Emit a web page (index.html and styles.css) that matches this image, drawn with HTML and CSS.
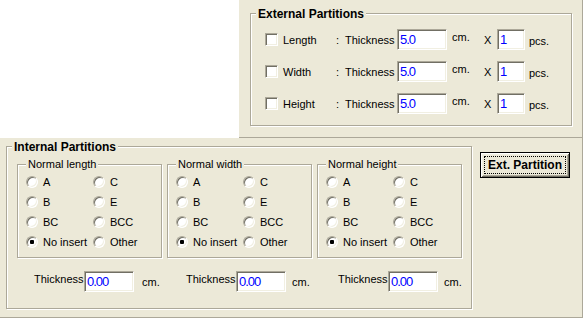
FILE: index.html
```html
<!DOCTYPE html>
<html lang="en">
<head>
  <meta charset="UTF-8">
  <title>Partitions</title>
  <link rel="stylesheet" href="styles.css">
</head>
<body>
<div class="top">
  <div class="panel ext-panel">
    <div class="group ext-group">
      <span class="group-title">External Partitions</span>
      <div class="ext-row">
        <input type="checkbox" class="check">
        <span class="name">Length</span>
        <span class="colon">:</span>
        <span class="thick">Thickness</span>
        <input class="field field-wide" value="5.0">
        <span class="unit">cm.</span>
        <span class="times">X</span>
        <input class="field field-small" value="1">
        <span class="pcs">pcs.</span>
      </div>
      <div class="ext-row">
        <input type="checkbox" class="check">
        <span class="name">Width</span>
        <span class="colon">:</span>
        <span class="thick">Thickness</span>
        <input class="field field-wide" value="5.0">
        <span class="unit">cm.</span>
        <span class="times">X</span>
        <input class="field field-small" value="1">
        <span class="pcs">pcs.</span>
      </div>
      <div class="ext-row">
        <input type="checkbox" class="check">
        <span class="name">Height</span>
        <span class="colon">:</span>
        <span class="thick">Thickness</span>
        <input class="field field-wide" value="5.0">
        <span class="unit">cm.</span>
        <span class="times">X</span>
        <input class="field field-small" value="1">
        <span class="pcs">pcs.</span>
      </div>
    </div>
  </div>
</div>

<div class="panel bottom-panel">
  <div class="group int-group">
    <span class="group-title">Internal Partitions</span>
    <div class="boxes">
      <div class="group box">
        <span class="box-title">Normal length</span>
        <div class="radios">
          <label class="opt"><input type="radio" name="len">A</label>
          <label class="opt"><input type="radio" name="len">C</label>
          <label class="opt"><input type="radio" name="len">B</label>
          <label class="opt"><input type="radio" name="len">E</label>
          <label class="opt"><input type="radio" name="len">BC</label>
          <label class="opt"><input type="radio" name="len">BCC</label>
          <label class="opt"><input type="radio" name="len" checked>No insert</label>
          <label class="opt"><input type="radio" name="len">Other</label>
        </div>
      </div>
      <div class="group box">
        <span class="box-title">Normal width</span>
        <div class="radios">
          <label class="opt"><input type="radio" name="wid">A</label>
          <label class="opt"><input type="radio" name="wid">C</label>
          <label class="opt"><input type="radio" name="wid">B</label>
          <label class="opt"><input type="radio" name="wid">E</label>
          <label class="opt"><input type="radio" name="wid">BC</label>
          <label class="opt"><input type="radio" name="wid">BCC</label>
          <label class="opt"><input type="radio" name="wid" checked>No insert</label>
          <label class="opt"><input type="radio" name="wid">Other</label>
        </div>
      </div>
      <div class="group box">
        <span class="box-title">Normal height</span>
        <div class="radios">
          <label class="opt"><input type="radio" name="hei">A</label>
          <label class="opt"><input type="radio" name="hei">C</label>
          <label class="opt"><input type="radio" name="hei">B</label>
          <label class="opt"><input type="radio" name="hei">E</label>
          <label class="opt"><input type="radio" name="hei">BC</label>
          <label class="opt"><input type="radio" name="hei">BCC</label>
          <label class="opt"><input type="radio" name="hei" checked>No insert</label>
          <label class="opt"><input type="radio" name="hei">Other</label>
        </div>
      </div>
    </div>
    <div class="thick-row">
      <div class="thick-cell">
        <span class="thick-label">Thickness</span>
        <input class="field field-mid" value="0.00">
        <span class="thick-unit">cm.</span>
      </div>
      <div class="thick-cell">
        <span class="thick-label">Thickness</span>
        <input class="field field-mid" value="0.00">
        <span class="thick-unit">cm.</span>
      </div>
      <div class="thick-cell">
        <span class="thick-label">Thickness</span>
        <input class="field field-mid" value="0.00">
        <span class="thick-unit">cm.</span>
      </div>
    </div>
  </div>
  <button class="btn"><span>Ext. Partition</span></button>
</div>
</body>
</html>
```

FILE: styles.css
```css
* {
    box-sizing: border-box;
}

body {
    margin: 0;
    width: 584px;
    height: 320px;
    background: #fff;
    font-family: "Liberation Sans", Arial, sans-serif;
    font-size: 11px;
    color: #000;
    overflow: hidden;
}

.top {
    display: flex;
    justify-content: flex-end;
    padding-right: 1px;
}

.panel {
    background: #ECE9D8;
    border-right: 1px solid #ACA899;
}

.ext-panel {
    width: 344px;
    height: 138px;
    padding: 13px 0 0 11px;
    border-bottom: 1px solid #ACA899;
}

.bottom-panel {
    width: 583px;
    height: 180px;
    display: flex;
    align-items: flex-start;
    padding: 8px 0 0 6px;
    border-bottom: 1px solid #ACA899;
}

/* etched group boxes */
.group {
    position: relative;
    border: 1px solid #ACA899;
    box-shadow: inset 1px 1px #fff, 1px 1px #fff;
}

.group-title {
    position: absolute;
    top: -7px;
    left: 5px;
    padding: 0 2px;
    background: #ECE9D8;
    font-weight: bold;
    font-size: 12px;
    line-height: 14px;
}

.box-title {
    position: absolute;
    top: -7px;
    left: 8px;
    padding: 0 2px;
    background: #ECE9D8;
    line-height: 13px;
}

.ext-group {
    width: 322px;
    height: 113px;
    padding: 15px 0 0 14px;
    display: flex;
    flex-direction: column;
    gap: 11px;
}

.ext-row {
    display: flex;
    align-items: center;
    height: 21px;
}

.check {
    appearance: none;
    width: 13px;
    height: 13px;
    margin: 0;
    border: 1px solid;
    border-color: #ACA899 #fff #fff #ACA899;
    box-shadow: inset 1px 1px #716F64, inset -1px -1px #F1EFE2;
    background: #fff;
}

.name {
    width: 53px;
    margin-left: 5px;
}

.colon {
    width: 9px;
}

.thick {
    width: 52px;
}

.field {
    height: 21px;
    margin: 0;
    padding: 0 0 0 2px;
    border: 1px solid;
    border-color: #ACA899 #fff #fff #ACA899;
    box-shadow: inset 1px 1px #716F64, inset -1px -1px #F1EFE2;
    background: #fff;
    color: #0000FF;
    font-family: "Liberation Sans", Arial, sans-serif;
    font-size: 13px;
    letter-spacing: -1px;
    outline: none;
}

.field-wide {
    width: 50px;
}

.field-small {
    width: 28px;
}

.field-mid {
    width: 50px;
}

.unit {
    width: 37px;
    padding-left: 5px;
    margin-bottom: 5px;
}

.times {
    width: 13px;
}

.pcs {
    padding-left: 4px;
    margin-top: 2px;
}

.int-group {
    width: 466px;
    height: 163px;
    padding: 17px 0 0 10px;
    flex-shrink: 0;
}

.boxes {
    display: grid;
    grid-template-columns: repeat(3, 145px);
    gap: 5px;
}

.box {
    height: 94px;
    padding: 7px 0 0 8px;
}

.radios {
    display: grid;
    grid-template-columns: 67px 67px;
    grid-auto-rows: 20px;
}

.opt {
    display: flex;
    align-items: center;
    gap: 5px;
}

.opt input {
    appearance: none;
    width: 12px;
    height: 12px;
    margin: 0;
    border-radius: 50%;
    border: 1px solid;
    border-color: #ACA899 #fff #fff #ACA899;
    box-shadow: inset 1px 1px #716F64, inset -1px -1px #F1EFE2;
    background: #fff;
}

.opt input:checked {
    background: radial-gradient(circle, #000 0 2px, #fff 2.5px);
}

.thick-row {
    display: grid;
    grid-template-columns: repeat(3, 145px);
    gap: 5px;
    margin-top: 13px;
}

.thick-cell {
    display: flex;
    align-items: center;
    padding-left: 17px;
}

.thick-cell:nth-child(2) {
    padding-left: 19px;
}

.thick-cell:nth-child(3) {
    padding-left: 21px;
}

.thick-label {
    width: 50px;
    margin-bottom: 6px;
}

.thick-unit {
    padding-left: 8px;
}

.thick-cell:nth-child(2) .thick-unit,
.thick-cell:nth-child(3) .thick-unit {
    padding-left: 6px;
}

.btn {
    width: 90px;
    height: 26px;
    margin: 6px 0 0 8px;
    padding: 3px;
    border: 1px solid #000;
    background: #ECE9D8;
    box-shadow: inset 1px 1px #fff, inset -1px -1px #716F64, inset 2px 2px #F1EFE2, inset -2px -2px #ACA899;
    font-family: "Liberation Sans", Arial, sans-serif;
    font-weight: bold;
    font-size: 12px;
    color: #000;
}

.btn span {
    display: block;
    height: 100%;
    border: 1px dotted #000;
    line-height: 16px;
}
```
